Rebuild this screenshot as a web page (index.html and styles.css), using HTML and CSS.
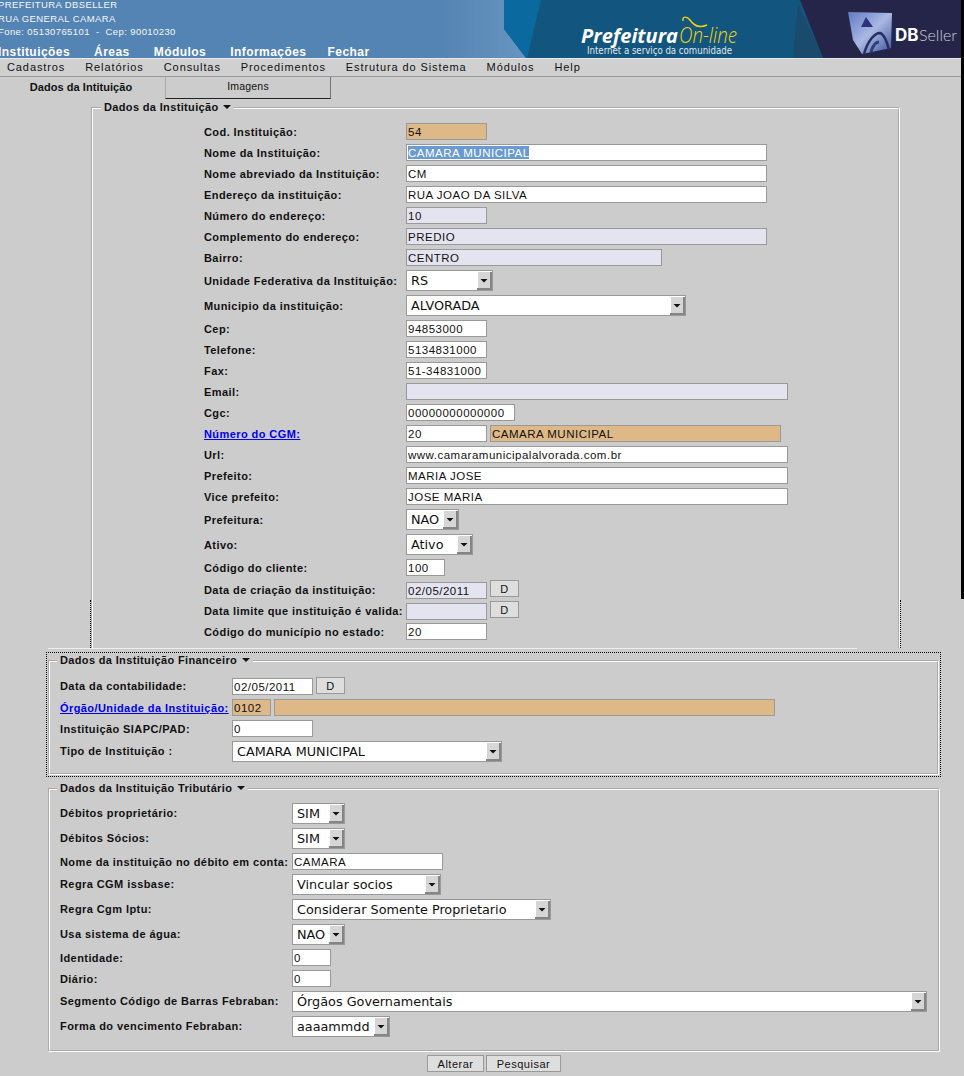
FILE: index.html
```html
<!DOCTYPE html>
<html lang="pt">
<head>
<meta charset="utf-8">
<title>Dados da Instituição</title>
<link rel="stylesheet" href="styles.css">
</head>
<body>
<div class="edge-strip"></div>
<header class="top">
  <div class="top-left">
    <div class="info">
      <div class="info-line">PREFEITURA DBSELLER</div>
      <div class="info-line">RUA GENERAL CAMARA</div>
      <div class="info-line">Fone: 05130765101 &nbsp;- &nbsp;Cep: 90010230</div>
    </div>
    <nav class="nav">
      <a class="nav-a">Instituições</a>
      <a class="nav-a">Áreas</a>
      <a class="nav-a">Módulos</a>
      <a class="nav-a">Informações</a>
      <a class="nav-a nav-last">Fechar</a>
    </nav>
  </div>
  <svg class="art" viewBox="440 0 524 58" width="524" height="58" aria-label="Prefeitura On-line e DBSeller">
    <defs>
      <linearGradient id="cube" x1="0" y1="0" x2="1" y2="1">
        <stop offset="0" stop-color="#6079c4"/>
        <stop offset=".5" stop-color="#a9b9e3"/>
        <stop offset="1" stop-color="#3d5198"/>
      </linearGradient>
      <linearGradient id="fade" x1="0" y1="0" x2="1" y2="0">
        <stop offset="0" stop-color="#5484b3"/>
        <stop offset="1" stop-color="#6795c0"/>
      </linearGradient>
    </defs>
    <rect x="440" y="0" width="524" height="58" fill="#12567f"/>
    <polygon points="440,0 504,0 504,29 526,58 440,58" fill="url(#fade)"/>
    <polygon points="504,0 541,0 527,58 526,58 504,29" fill="#0a6a9f"/>
    <polygon points="800,0 964,0 964,58 823,58" fill="#25254a"/>
    <polygon points="798,4 793,58 823,58" fill="#1a4a6c"/>
    <text class="art-pref" x="581" y="43" textLength="97" lengthAdjust="spacingAndGlyphs">Prefeitura</text>
    <text class="art-on" x="679" y="43" textLength="58" lengthAdjust="spacingAndGlyphs">On-line</text>
    <path d="M683 21 C682 16 687 16 690 20 C694 26 700 28 707 25" fill="none" stroke="#f2d40e" stroke-width="1.4"/>
    <text class="art-sub" x="587" y="54" textLength="145" lengthAdjust="spacingAndGlyphs">Internet a serviço da comunidade</text>
    <polygon points="848,12 892,13 891,48 862,54 853,40" fill="url(#cube)"/>
    <polygon points="866,17 873,27 861,27" fill="#2e3278"/>
    <path d="M864 54 C868 40 875 33 880 33 C884 34 887 42 889 50" fill="none" stroke="#26305e" stroke-width="2.5"/>
    <path d="M871 52 C873 45 876 42 879 42" fill="none" stroke="#2e3f7c" stroke-width="3"/>
    <text class="art-db" x="895" y="41">DB</text>
    <text class="art-seller" x="919" y="41" textLength="38" lengthAdjust="spacingAndGlyphs">Seller</text>
  </svg>
</header>
<div class="menu">
  <span>Cadastros</span><span>Relatórios</span><span>Consultas</span><span>Procedimentos</span><span>Estrutura do Sistema</span><span>Módulos</span><span>Help</span>
</div>
<div class="tabs">
  <div class="tab tab-on">Dados da Intituição</div>
  <div class="tab tab-off">Imagens</div>
</div>
<form class="page">
  <fieldset class="fs fs-main">
    <legend class="lg">Dados da Instituição <i class="caret"></i></legend>
    <div class="row"><label>Cod. Instituição:</label><input class="orange w81" value="54"></div>
    <div class="row"><label>Nome da Instituição:</label><input class="w361 picked" value="CAMARA MUNICIPAL"></div>
    <div class="row"><label>Nome abreviado da Instituição:</label><input class="w361" value="CM"></div>
    <div class="row"><label>Endereço da instituição:</label><input class="w361" value="RUA JOAO DA SILVA"></div>
    <div class="row"><label>Número do endereço:</label><input class="lilac w81" value="10"></div>
    <div class="row"><label>Complemento do endereço:</label><input class="lilac w361" value="PREDIO"></div>
    <div class="row"><label>Bairro:</label><input class="lilac w256" value="CENTRO"></div>
    <div class="row row-s"><label>Unidade Federativa da Instituição:</label><select class="w87"><option>RS</option></select></div>
    <div class="row row-s"><label>Municipio da instituição:</label><select class="w280"><option>ALVORADA</option></select></div>
    <div class="row"><label>Cep:</label><input class="w81" value="94853000"></div>
    <div class="row"><label>Telefone:</label><input class="w81" value="5134831000"></div>
    <div class="row"><label>Fax:</label><input class="w81" value="51-34831000"></div>
    <div class="row"><label>Email:</label><input class="lilac w382" value=""></div>
    <div class="row"><label>Cgc:</label><input class="w109" value="00000000000000"></div>
    <div class="row"><label><a class="lnk">Número do CGM:</a></label><input class="w81" value="20"><input class="orange w291 next" value="CAMARA MUNICIPAL"></div>
    <div class="row"><label>Url:</label><input class="w382" value="www.camaramunicipalalvorada.com.br"></div>
    <div class="row"><label>Prefeito:</label><input class="w382" value="MARIA JOSE"></div>
    <div class="row"><label>Vice prefeito:</label><input class="w382" value="JOSE MARIA"></div>
    <div class="row row-s"><label>Prefeitura:</label><select class="w53"><option>NAO</option></select></div>
    <div class="row row-s"><label>Ativo:</label><select class="w67"><option>Ativo</option></select></div>
    <div class="row"><label>Código do cliente:</label><input class="w39" value="100"></div>
    <div class="row row-d"><label>Data de criação da instituição:</label><input class="lilac w81 low" value="02/05/2011"><button type="button" class="btn btn-d">D</button></div>
    <div class="row row-d row-d2"><label>Data limite que instituição é valida:</label><input class="lilac w81 low" value=""><button type="button" class="btn btn-d">D</button></div>
    <div class="row"><label>Código do município no estado:</label><input class="w81" value="20"></div>
    <div class="focus-edge"></div>
    <div class="stray-line"></div>
  </fieldset>

  <div class="focus-box">
    <fieldset class="fs fs-wide fs-fin">
      <legend class="lg">Dados da Instituição Financeiro <i class="caret"></i></legend>
      <div class="row row-d row-c"><label>Data da contabilidade:</label><input class="w81 low1" value="02/05/2011"><button type="button" class="btn btn-d">D</button></div>
      <div class="row"><label><a class="lnk">Órgão/Unidade da Instituição:</a></label><input class="orange w39" value="0102"><input class="orange w501 next" value=""></div>
      <div class="row"><label>Instituição SIAPC/PAD:</label><input class="w81" value="0"></div>
      <div class="row row-s"><label>Tipo de Instituição :</label><select class="w270"><option>CAMARA MUNICIPAL</option></select></div>
    </fieldset>
  </div>

  <fieldset class="fs fs-wide fs-trib">
    <legend class="lg">Dados da Instituição Tributário <i class="caret"></i></legend>
    <div class="row row-s"><label>Débitos proprietário:</label><select class="w53"><option>SIM</option></select></div>
    <div class="row row-s"><label>Débitos Sócios:</label><select class="w53"><option>SIM</option></select></div>
    <div class="row"><label>Nome da instituição no débito em conta:</label><input class="w151" value="CAMARA"></div>
    <div class="row row-s"><label>Regra CGM issbase:</label><select class="w149"><option>Vincular socios</option></select></div>
    <div class="row row-s"><label>Regra Cgm Iptu:</label><select class="w259"><option>Considerar Somente Proprietario</option></select></div>
    <div class="row row-s"><label>Usa sistema de água:</label><select class="w53"><option>NAO</option></select></div>
    <div class="row"><label>Identidade:</label><input class="w39" value="0"></div>
    <div class="row"><label>Diário:</label><input class="w39" value="0"></div>
    <div class="row row-s"><label>Segmento Código de Barras Febraban:</label><select class="w635"><option>Órgãos Governamentais</option></select></div>
    <div class="row row-s"><label>Forma do vencimento Febraban:</label><select class="w98"><option>aaaammdd</option></select></div>
  </fieldset>

  <div class="actions">
    <button type="button" class="btn btn-a">Alterar</button>
    <button type="button" class="btn btn-p">Pesquisar</button>
  </div>
</form>
</body>
</html>
```

FILE: styles.css
```css
* { box-sizing: border-box; }
html, body { margin: 0; height: 1076px; overflow: hidden; }
body {
  position: relative;
  background: #cccccc;
  color: #111;
  font: 11px "Liberation Sans", Arial, sans-serif;
}
.edge-strip {
  position: absolute;
  top: 0;
  right: 0;
  width: 3px;
  height: 599px;
  background: #000;
  z-index: 5;
}

/* header */
.top {
  display: flex;
  height: 58px;
  background: #5484b3;
  overflow: hidden;
}
.top-left { width: 440px; flex: none; color: #fff; }
.info { margin-left: -2px; height: 40px; }
.info-line {
  height: 13.5px;
  line-height: 10px;
  font-size: 9.5px;
  letter-spacing: .4px;
  color: #f4f7fa;
  white-space: nowrap;
}
.nav {
  display: flex;
  gap: 24px;
  margin-left: -2px;
  font-weight: bold;
  font-size: 12px;
  letter-spacing: .45px;
  line-height: 14px;
  height: 18px;
  padding-top: 5px;
  white-space: nowrap;
}
.nav-a { color: #fff; }
.nav-last { margin-left: -3px; }
.art { display: block; flex: none; }
.art-pref { font: italic bold 20px "Open Sans", sans-serif; fill: #fff; }
.art-on { font: italic 300 22px "Open Sans", sans-serif; fill: #f2d40e; }
.art-sub { font: 10px "DejaVu Sans", sans-serif; fill: #e0e6ea; }
.art-db { font: bold 17px "Inter", sans-serif; fill: #fff; }
.art-seller { font: 300 16px "Lato", sans-serif; fill: #c9cbd6; }

/* menu */
.menu {
  display: flex;
  gap: 20px;
  height: 19px;
  padding-left: 7px;
  background: #d0d0d0;
  border-top: 1px solid #e8e8e8;
  border-bottom: 1px solid #999;
  font-size: 11px;
  letter-spacing: .9px;
  line-height: 16px;
  white-space: nowrap;
}

/* tabs */
.tabs { display: flex; height: 22px; }
.tab { text-align: center; }
.tab-on {
  width: 165px;
  padding: 4px 3px 0 0;
  font-weight: bold;
  letter-spacing: .05px;
}
.tab-off {
  width: 166px;
  padding-top: 3px;
  border-left: 1px solid #aaa;
  border-right: 1px solid #777;
  border-bottom: 1px solid #222;
  letter-spacing: .2px;
  font-size: 10.5px;
}

/* fieldsets */
.fs {
  margin: 0;
  padding: 0;
  min-width: 0;
  border: 2px groove #fff;
}
.lg {
  padding: 0 3px;
  height: 13px;
  line-height: 13px;
  font-weight: bold;
  letter-spacing: .35px;
  white-space: nowrap;
}
.caret {
  display: inline-block;
  vertical-align: 2px;
  margin-left: 1px;
  border: 4px solid transparent;
  border-top: 4px solid #111;
  border-bottom: 0;
}
.fs-main {
  position: relative;
  margin: 2px 0 0 91px;
  width: 809px;
  padding: 7px 0 6px;
  border-bottom: 0;
}
.fs-main .lg { margin-left: 8px; }
.fs-main .row { padding-left: 111px; }
.fs-main label { width: 202px; }
.fs-main .row-s label { line-height: 22px; }
.fs-main .row-d label { line-height: 20px; }
.fs-wide { width: 891px; }
.fs-wide .lg { margin-left: 7px; }
.fs-wide .row { padding-left: 10px; }
.fs-fin { padding: 8px 0 9px; }
.fs-fin label { width: 172px; }
.fs-fin .row label { line-height: 18px; }
.fs-fin .row-s label { line-height: 21px; }
.fs-trib { margin: 5px 0 0 48px; width: 892px; padding: 6px 0 11px; }
.fs-trib label { width: 232px; }
.fs-trib .row-s label { line-height: 21px; }

.focus-box {
  margin: 4px 0 0 46px;
  width: 895px;
  padding: 1px;
  border: 1px dotted #000;
}
.focus-edge {
  position: absolute;
  left: -3px;
  right: -3px;
  bottom: 0;
  height: 48px;
  border-left: 1px dotted #000;
  border-right: 1px dotted #000;
}
.stray-line {
  position: absolute;
  left: -45px;
  bottom: -1px;
  width: 809px;
  height: 1px;
  background: #eee;
}

/* rows */
.row {
  display: flex;
  align-items: flex-start;
  height: 21px;
  padding-top: 2px;
}
.row-s { height: 25px; }
.row-d2 { height: 22px; }
.row-c { height: 22px; }
label {
  display: block;
  flex: none;
  font-weight: bold;
  line-height: 19px;
  letter-spacing: .42px;
  white-space: nowrap;
}
.lnk { color: #0000ee; text-decoration: underline; }

/* controls */
input, select, .btn {
  font-family: "Liberation Sans", Arial, sans-serif;
  color: #111;
  margin: 0;
  flex: none;
}
input {
  display: block;
  height: 17px;
  padding: 0 1px;
  border: 1px solid #999;
  border-radius: 0;
  background: #fff;
  font-size: 11.5px;
  letter-spacing: .5px;
  outline: 0;
}
.orange { background: #deb887; }
.lilac { background: #e4e4f0; }
.picked {
  color: #fff;
  background: #fff linear-gradient(#6a9ad2, #6a9ad2) 1px 1px / 121px 13px no-repeat;
}
.next { margin-left: 3px; }
.low { margin-top: 2px; }
.low1 { margin-top: 1px; }
select {
  display: block;
  height: 21px;
  padding: 0 16px 0 4px;
  border: 1px solid #999;
  border-radius: 0;
  appearance: none;
  -webkit-appearance: none;
  background: #fff url("data:image/svg+xml,%3Csvg xmlns='http://www.w3.org/2000/svg' width='15' height='19'%3E%3Crect width='15' height='19' fill='%23d6d6d6'/%3E%3Cpath d='M0 0h15v1H1v18H0z' fill='%23fff'/%3E%3Cpath d='M13 1h2v18H0v-2h13z' fill='%23858585'/%3E%3Cpath d='M3.5 8h7L7 11.5z' fill='%23111'/%3E%3C/svg%3E") right center no-repeat;
  font: 12.8px "DejaVu Sans", sans-serif;
  color: #111;
}
.btn {
  display: block;
  height: 17px;
  padding: 2px 0 0;
  border: 1px solid #999;
  border-radius: 0;
  background: #dedede;
  font-size: 11px;
  letter-spacing: .5px;
  line-height: 13px;
  text-align: center;
}
.btn-d { width: 29px; margin-left: 3px; }
.btn-a { width: 57px; }
.btn-p { width: 75px; }
.actions {
  display: flex;
  gap: 2px;
  margin-top: 3px;
  padding-left: 427px;
}

/* widths */
.w39 { width: 39px; }
.w53 { width: 53px; }
.w67 { width: 67px; }
.w81 { width: 81px; }
.w87 { width: 87px; }
.w98 { width: 98px; }
.w109 { width: 109px; }
.w149 { width: 149px; }
.w151 { width: 151px; }
.w256 { width: 256px; }
.w259 { width: 259px; }
.w270 { width: 270px; }
.w280 { width: 280px; }
.w291 { width: 291px; }
.w361 { width: 361px; }
.w382 { width: 382px; }
.w501 { width: 501px; }
.w635 { width: 635px; }
```
